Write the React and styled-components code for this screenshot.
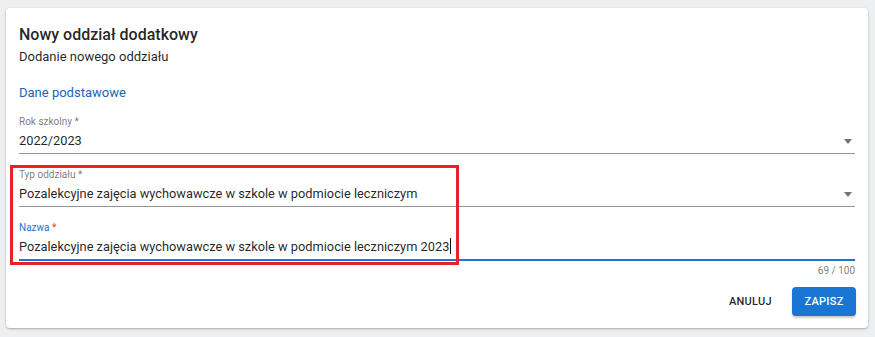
import React from "react";
import styled, { createGlobalStyle } from "styled-components";

const Global = createGlobalStyle`
  html, body { margin: 0; padding: 0; }
  body {
    background: #eeeff1;
    font-family: Roboto, "Liberation Sans", Arial, sans-serif;
    color: rgba(0,0,0,0.87);
  }
`;

const Page = styled.div`
  padding: 8px 7px 9px 6px;
`;

const Card = styled.div`
  position: relative;
  background: #fff;
  border-radius: 4px;
  box-shadow: 0 1px 3px rgba(0,0,0,0.22), 0 1px 1px rgba(0,0,0,0.1);
  padding: 15px 13px 12px 13px;
  height: 320px;
  box-sizing: border-box;
  display: flex;
  flex-direction: column;
`;

const Title = styled.h2`
  margin: 0;
  font-size: 16px;
  line-height: 24px;
  font-weight: 500;
  color: rgba(0,0,0,0.87);
`;

const Subtitle = styled.div`
  font-size: 13px;
  line-height: 20px;
  color: rgba(0,0,0,0.87);
`;

const Section = styled.div`
  margin-top: 16px;
  font-size: 13px;
  line-height: 20px;
  color: #1565c0;
  margin-bottom: 12px;
`;

const Field = styled.div`
  display: flex;
  flex-direction: column;
  margin-bottom: ${(p) => p.$mb}px;
`;

const Label = styled.label`
  font-size: 10px;
  line-height: 14px;
  color: ${(p) => (p.$focused ? "#1976d2" : "rgba(0,0,0,0.55)")};
`;

const Star = styled.span`
  color: ${(p) => (p.$focused ? "#e53935" : "inherit")};
`;

const InputRow = styled.div`
  display: flex;
  align-items: center;
  justify-content: space-between;
  font-size: 12.8px;
  line-height: 20px;
  padding: 2px 0 2px;
  border-bottom: ${(p) => (p.$focused ? "2px solid #1976d2" : "1px solid rgba(0,0,0,0.42)")};
  margin-bottom: ${(p) => (p.$focused ? "0" : "1px")};
`;

const Value = styled.span`
  color: rgba(0,0,0,0.87);
`;

const Caret = styled.span`
  display: inline-block;
  width: 1px;
  height: 16px;
  background: #111;
  margin-left: 1px;
  vertical-align: -3px;
`;

const Arrow = styled.span`
  width: 0;
  height: 0;
  border-left: 4.5px solid transparent;
  border-right: 4.5px solid transparent;
  border-top: 5px solid rgba(0,0,0,0.55);
  margin-right: 3px;
`;

const Counter = styled.div`
  text-align: right;
  font-size: 10px;
  line-height: 14px;
  color: rgba(0,0,0,0.55);
  margin-top: 3px;
`;

const Actions = styled.div`
  margin-top: auto;
  display: flex;
  justify-content: flex-end;
  align-items: center;
  gap: 12px;
  padding-right: 0;
  margin-right: -1px;
`;

const Button = styled.button`
  font-family: inherit;
  font-size: 11px;
  font-weight: 500;
  letter-spacing: 0.3px;
  text-transform: uppercase;
  height: 29px;
  min-width: ${(p) => (p.$primary ? "64px" : "0")};
  padding: 0 8px;
  border: none;
  border-radius: 4px;
  background: ${(p) => (p.$primary ? "#1976d2" : "transparent")};
  color: ${(p) => (p.$primary ? "#fff" : "rgba(0,0,0,0.87)")};
  box-shadow: ${(p) => (p.$primary ? "0 2px 2px rgba(0,0,0,0.2)" : "none")};
`;

const Highlight = styled.div`
  position: absolute;
  left: 4px;
  top: 157px;
  width: 449px;
  height: 100px;
  box-sizing: border-box;
  border: 3px solid #e8202a;
  pointer-events: none;
`;

export default function App() {
  return (
    <Page>
      <Global />
      <Card>
        <Title>Nowy oddział dodatkowy</Title>
        <Subtitle>Dodanie nowego oddziału</Subtitle>
        <Section>Dane podstawowe</Section>

        <Field $mb={13}>
          <Label>Rok szkolny *</Label>
          <InputRow>
            <Value>2022/2023</Value>
            <Arrow />
          </InputRow>
        </Field>

        <Field $mb={13}>
          <Label>Typ oddziału *</Label>
          <InputRow>
            <Value>Pozalekcyjne zajęcia wychowawcze w szkole w podmiocie leczniczym</Value>
            <Arrow />
          </InputRow>
        </Field>

        <Field $mb={0}>
          <Label $focused>
            Nazwa <Star $focused>*</Star>
          </Label>
          <InputRow $focused>
            <Value>
              Pozalekcyjne zajęcia wychowawcze w szkole w podmiocie leczniczym 2023
              <Caret />
            </Value>
          </InputRow>
          <Counter>69 / 100</Counter>
        </Field>

        <Actions>
          <Button>Anuluj</Button>
          <Button $primary>Zapisz</Button>
        </Actions>

        <Highlight />
      </Card>
    </Page>
  );
}
